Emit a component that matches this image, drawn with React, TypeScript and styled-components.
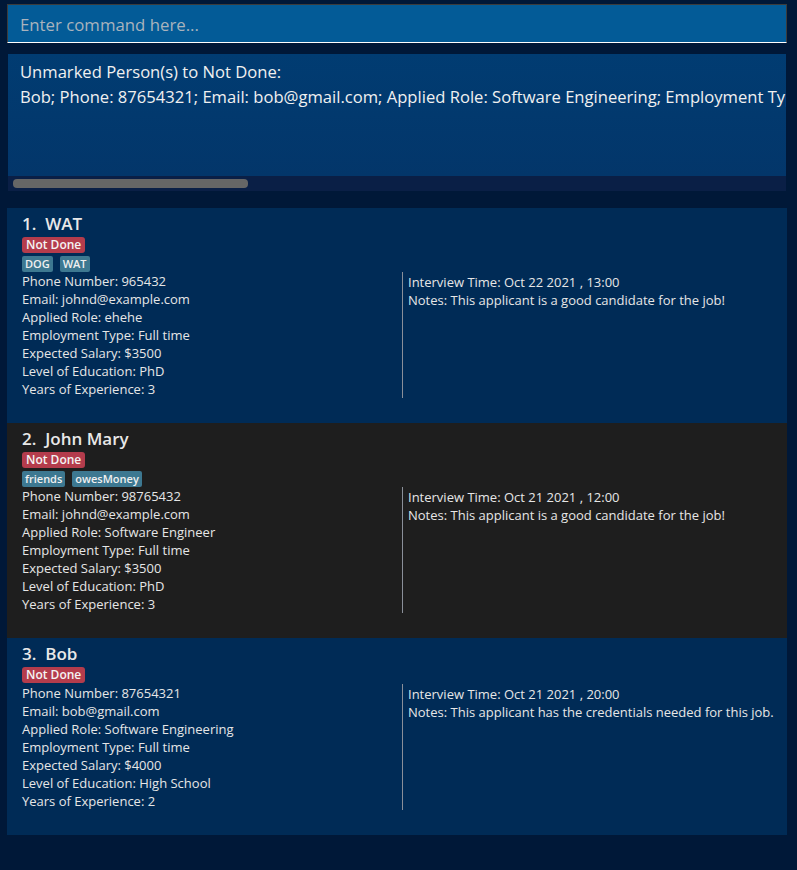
import React from "react";
import styled, { createGlobalStyle } from "styled-components";

const Global = createGlobalStyle`
  html, body { margin: 0; padding: 0; background: #001838; }
  body { font-family: "Open Sans", "Noto Sans", sans-serif; }
  * { box-sizing: border-box; }
`;

const Page = styled.div`
  width: 797px;
  height: 870px;
  padding: 4px 10px 0 7px;
  display: flex;
  flex-direction: column;
  background: #001838;
  overflow: hidden;
`;

const CommandBox = styled.input`
  height: 39px;
  width: 100%;
  margin: 0;
  padding: 2px 0 0 12px;
  background: #035b97;
  border: 1px solid #3c3c3c;
  border-bottom: 1px solid #ffffff;
  color: #ffffff;
  font-family: "Open Sans", sans-serif;
  font-size: 16.8px;
  outline: none;
  &::placeholder { color: #a9b3bd; }
`;

const ResultPanel = styled.div`
  margin: 11px 1px 0 1px;
  display: flex;
  flex-direction: column;
`;

const ResultText = styled.div`
  height: 122px;
  padding: 5px 0 0 12px;
  background: linear-gradient(#013c72, #03366a);
  color: #f0f0f0;
  font-size: 16.6px;
  line-height: 25px;
  white-space: nowrap;
  overflow: hidden;
`;

const ScrollTrack = styled.div`
  height: 15px;
  background: #0a1f46;
  padding: 3px 0 0 5px;
`;

const ScrollThumb = styled.div`
  height: 9px;
  background: #666666;
  border-radius: 4px;
`;

const List = styled.div`
  margin-top: 17px;
  display: flex;
  flex-direction: column;
`;

const Card = styled.div<{ $dark?: boolean }>`
  background: ${(p) => (p.$dark ? "#1e1e1e" : "#002b56")};
  padding: 5px 0 25px 15px;
  color: #e6e6e6;
  display: flex;
  flex-direction: column;
  align-items: flex-start;
`;

const Title = styled.div`
  font-size: 17px;
  font-weight: 600;
  line-height: 22px;
  white-space: pre;
  color: #e8e8e8;
`;

const StatusBadge = styled.span`
  margin-top: 2px;
  height: 16px;
  line-height: 16px;
  padding: 0 4px;
  background: #b43c4c;
  color: #f4f4f4;
  font-size: 12px;
  font-weight: 600;
  border-radius: 3px;
`;

const Tags = styled.div`
  margin-top: 1px;
  display: flex;
  gap: 7px;
`;

const Tag = styled.span`
  margin-top: 2px;
  height: 16px;
  line-height: 16px;
  padding: 0 3px;
  background: #3d7891;
  color: #f0f0f0;
  font-size: 11px;
  font-weight: 600;
  border-radius: 2px;
`;

const Details = styled.div`
  display: grid;
  grid-template-columns: 380px 1fr;
  width: 100%;
`;

const Column = styled.div`
  display: flex;
  flex-direction: column;
  font-size: 13px;
  line-height: 18px;
`;

const SideColumn = styled(Column)`
  border-left: 1px solid #8a8f99;
  padding: 1px 0 0 5px;
`;

type Person = {
  name: string;
  tags: string[];
  phone: string;
  email: string;
  role: string;
  type: string;
  salary: string;
  edu: string;
  years: string;
  time: string;
  notes: string;
  dark?: boolean;
};

const people: Person[] = [
  {
    name: "WAT",
    tags: ["DOG", "WAT"],
    phone: "965432",
    email: "johnd@example.com",
    role: "ehehe",
    type: "Full time",
    salary: "$3500",
    edu: "PhD",
    years: "3",
    time: "Oct 22 2021 , 13:00",
    notes: "This applicant is a good candidate for the job!",
  },
  {
    name: "John Mary",
    tags: ["friends", "owesMoney"],
    phone: "98765432",
    email: "johnd@example.com",
    role: "Software Engineer",
    type: "Full time",
    salary: "$3500",
    edu: "PhD",
    years: "3",
    time: "Oct 21 2021 , 12:00",
    notes: "This applicant is a good candidate for the job!",
    dark: true,
  },
  {
    name: "Bob",
    tags: [],
    phone: "87654321",
    email: "bob@gmail.com",
    role: "Software Engineering",
    type: "Full time",
    salary: "$4000",
    edu: "High School",
    years: "2",
    time: "Oct 21 2021 , 20:00",
    notes: "This applicant has the credentials needed for this job.",
  },
];

export default function App() {
  return (
    <>
      <Global />
      <Page>
        <CommandBox placeholder="Enter command here..." />
        <ResultPanel>
          <ResultText>
            <div>Unmarked Person(s) to Not Done:</div>
            <div>
              Bob; Phone: 87654321; Email: bob@gmail.com; Applied Role: Software Engineering; Employment Type: Full time; Expected Salary: $4000; Level of Education: High School; Years of Experience: 2
            </div>
          </ResultText>
          <ScrollTrack>
            <ScrollThumb style={{ width: 235 }} />
          </ScrollTrack>
        </ResultPanel>
        <List>
          {people.map((p, i) => (
            <Card key={i} $dark={p.dark}>
              <Title>{`${i + 1}.  ${p.name}`}</Title>
              <StatusBadge>Not Done</StatusBadge>
              <Tags>
                {p.tags.map((t) => (
                  <Tag key={t}>{t}</Tag>
                ))}
              </Tags>
              <Details>
                <Column>
                  <span>Phone Number: {p.phone}</span>
                  <span>Email: {p.email}</span>
                  <span>Applied Role: {p.role}</span>
                  <span>Employment Type: {p.type}</span>
                  <span>Expected Salary: {p.salary}</span>
                  <span>Level of Education: {p.edu}</span>
                  <span>Years of Experience: {p.years}</span>
                </Column>
                <SideColumn>
                  <span>Interview Time: {p.time}</span>
                  <span>Notes: {p.notes}</span>
                </SideColumn>
              </Details>
            </Card>
          ))}
        </List>
      </Page>
    </>
  );
}
